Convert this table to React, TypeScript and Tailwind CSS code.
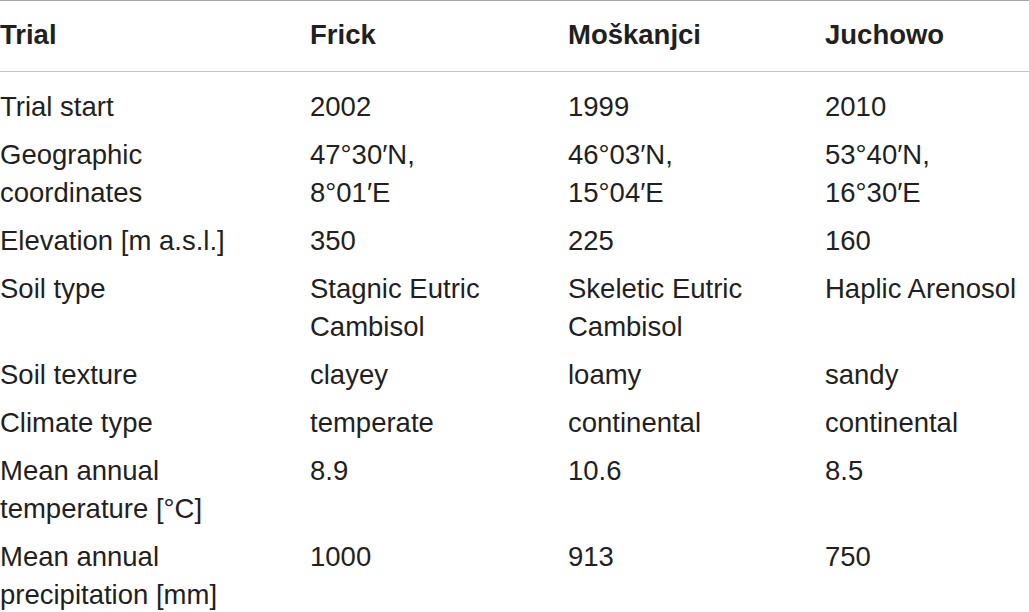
const headers = ["Trial", "Frick", "Moškanjci", "Juchowo"];

const rows: string[][][] = [
  [["Trial start"], ["2002"], ["1999"], ["2010"]],
  [["Geographic", "coordinates"], ["47°30′N,", "8°01′E"], ["46°03′N,", "15°04′E"], ["53°40′N,", "16°30′E"]],
  [["Elevation [m a.s.l.]"], ["350"], ["225"], ["160"]],
  [["Soil type"], ["Stagnic Eutric", "Cambisol"], ["Skeletic Eutric", "Cambisol"], ["Haplic Arenosol"]],
  [["Soil texture"], ["clayey"], ["loamy"], ["sandy"]],
  [["Climate type"], ["temperate"], ["continental"], ["continental"]],
  [["Mean annual", "temperature [°C]"], ["8.9"], ["10.6"], ["8.5"]],
  [["Mean annual", "precipitation [mm]"], ["1000"], ["913"], ["750"]],
];

export default function App() {
  return (
    <main className="w-[1029px] h-[612px] overflow-hidden bg-white text-[#231f20] font-['Liberation_Sans',Arial,sans-serif] text-[27.5px] leading-[38px]">
      <table className="w-full table-fixed border-collapse">
        <colgroup>
          <col className="w-[310px]" />
          <col className="w-[258px]" />
          <col className="w-[257px]" />
          <col />
        </colgroup>
        <thead>
          <tr className="border-t border-t-[#a3a3a3] border-b border-b-[#c4c4c4]">
            {headers.map((h) => (
              <th key={h} className="text-left font-bold pt-[15px] pb-[17px] px-0 whitespace-nowrap">
                {h}
              </th>
            ))}
          </tr>
        </thead>
        <tbody>
          {rows.map((row, i) => (
            <tr key={i}>
              {row.map((cell, j) => (
                <td
                  key={j}
                  className={`align-top px-0 pb-[6px] whitespace-nowrap ${i === 0 ? "pt-[16px]" : "pt-[4px]"}`}
                >
                  {cell.map((line, k) => (
                    <div key={k}>{line}</div>
                  ))}
                </td>
              ))}
            </tr>
          ))}
        </tbody>
      </table>
    </main>
  );
}
